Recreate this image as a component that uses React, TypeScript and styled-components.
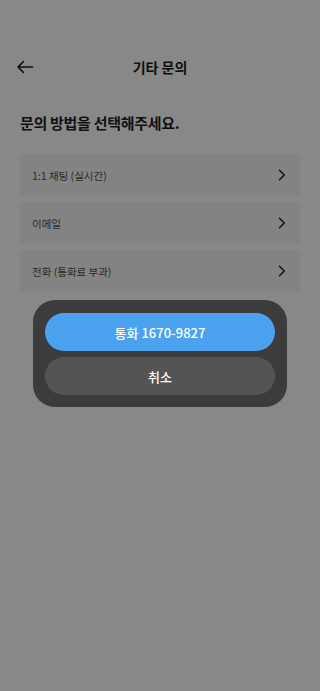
import React from 'react';
import styled, { createGlobalStyle } from 'styled-components';

const GlobalStyle = createGlobalStyle`
	html, body {
		margin: 0;
		padding: 0;
		background: #ffffff;
	}
	body {
		font-family: 'Noto Sans CJK KR', 'Noto Sans', sans-serif;
		-webkit-font-smoothing: antialiased;
	}
	* {
		box-sizing: border-box;
	}
`;

const methods = ['1:1 채팅 (실시간)', '이메일', '전화 (통화료 부과)'];

const BackArrow = () => (
	<svg width='18' height='14' viewBox='0 0 18 14' fill='none'>
		<path
			d='M16.5 7H2M7.5 1.5L2 7l5.5 5.5'
			stroke='#1c1c1c'
			strokeWidth='1.6'
			strokeLinecap='round'
			strokeLinejoin='round'
		/>
	</svg>
);

const Chevron = () => (
	<svg width='8' height='12' viewBox='0 0 8 12' fill='none'>
		<path
			d='M1.5 1.2L6.3 6l-4.8 4.8'
			stroke='#1c1c1c'
			strokeWidth='1.4'
			strokeLinecap='round'
			strokeLinejoin='round'
		/>
	</svg>
);

const App = () => {
	return (
		<>
			<GlobalStyle />
			<Page>
				<Header>
					<BackButton>
						<BackArrow />
					</BackButton>
					<Title>기타 문의</Title>
				</Header>
				<Heading>문의 방법을 선택해주세요.</Heading>
				<MethodList>
					{methods.map((m) => (
						<MethodRow key={m}>
							<span>{m}</span>
							<Chevron />
						</MethodRow>
					))}
				</MethodList>
			</Page>
			<Overlay>
				<Sheet>
					<SheetButton primary>통화 1670-9827</SheetButton>
					<SheetButton>취소</SheetButton>
				</Sheet>
			</Overlay>
		</>
	);
};

const Page = styled.div`
	min-height: 691px;
	padding: 43px 20px 0;
	background: #ffffff;
`;

const Header = styled.div`
	position: relative;
	height: 48px;
	display: flex;
	align-items: center;
	justify-content: center;
`;

const BackButton = styled.div`
	position: absolute;
	left: -4px;
	top: 50%;
	transform: translateY(-50%);
	display: flex;
	align-items: center;
`;

const Title = styled.h1`
	margin: 0;
	font-size: 14px;
	font-weight: 600;
	color: #1c1c1c;
`;

const Heading = styled.h2`
	margin: 21px 0 0;
	font-size: 15px;
	line-height: 22px;
	font-weight: 700;
	letter-spacing: -0.3px;
	color: #1f1f1f;
`;

const MethodList = styled.div`
	margin-top: 20px;
	display: flex;
	flex-direction: column;
	gap: 6px;
`;

const MethodRow = styled.div`
	height: 42px;
	padding: 0 14px 0 12px;
	display: flex;
	align-items: center;
	justify-content: space-between;
	background: #f5f5f5;
	border-radius: 4px;
	font-size: 10.5px;
	color: #4f4f4f;
`;

const Overlay = styled.div`
	position: fixed;
	inset: 0;
	background: rgba(0, 0, 0, 0.467);
	display: flex;
	justify-content: center;
	align-items: flex-start;
	padding-top: 300px;
`;

const Sheet = styled.div`
	width: 254px;
	padding: 13px 12px 12px;
	display: flex;
	flex-direction: column;
	gap: 6px;
	background: #3c3c3c;
	border-radius: 22px;
`;

const SheetButton = styled.div<{ primary?: boolean }>`
	height: 38px;
	border-radius: 19px;
	display: flex;
	align-items: center;
	justify-content: center;
	font-size: 13px;
	font-weight: 500;
	color: #ffffff;
	background: ${(p) => (p.primary ? '#4ba3f0' : '#545454')};
`;

export default App;
